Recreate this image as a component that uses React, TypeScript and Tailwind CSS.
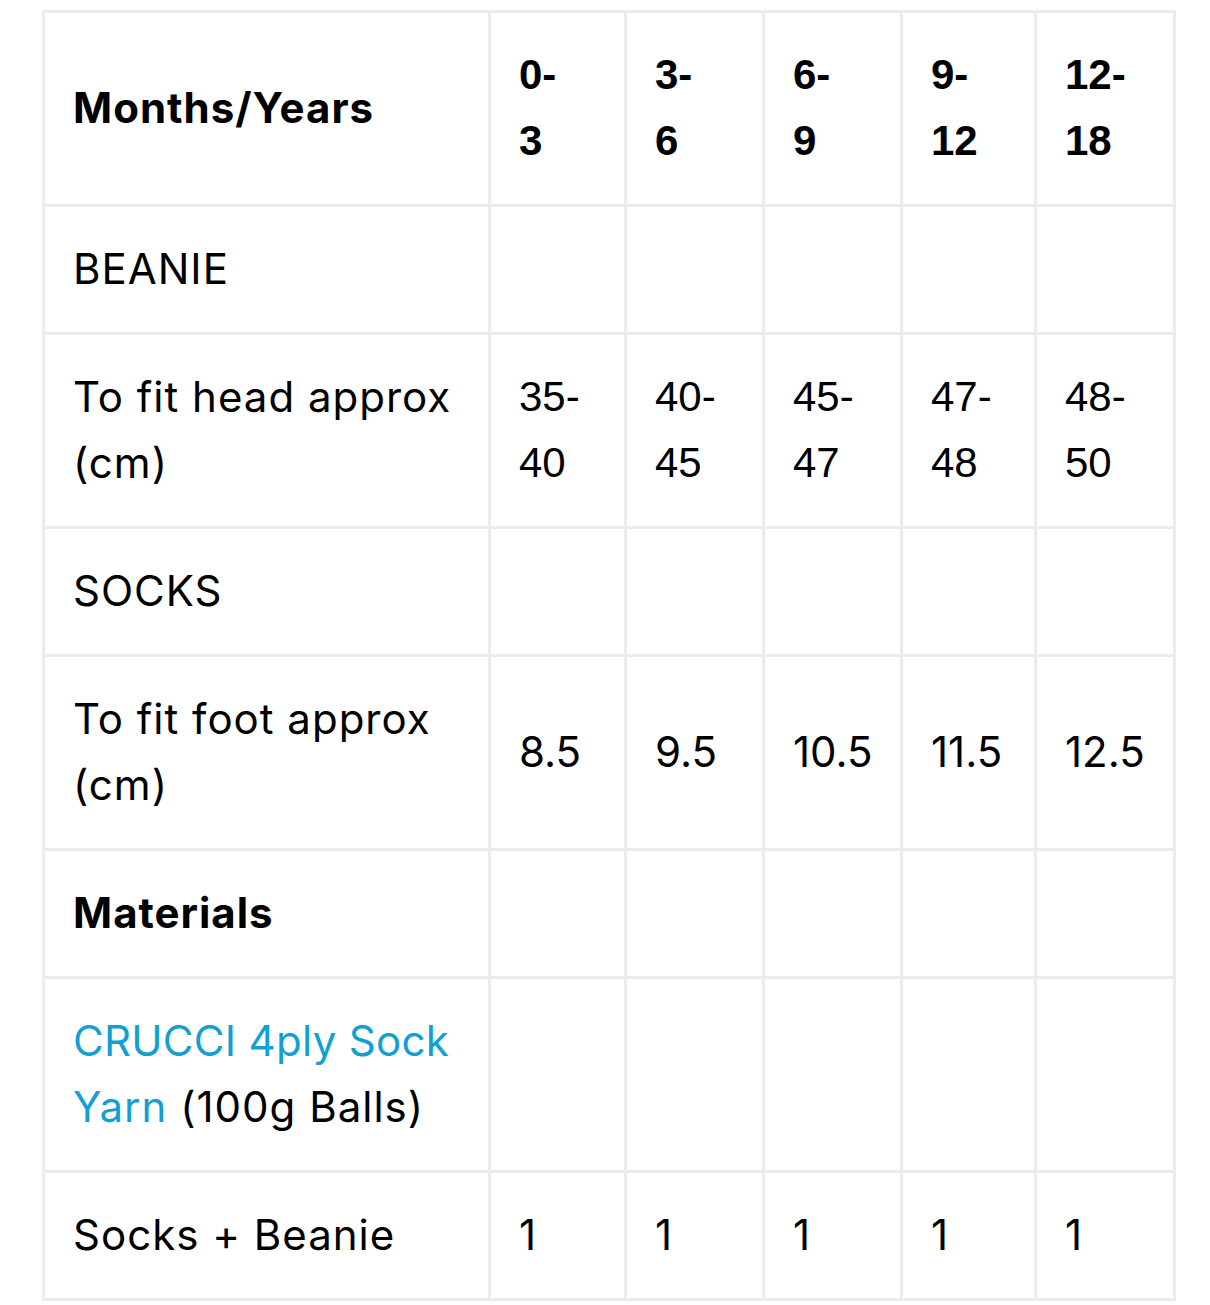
import React from 'react';

const sans = "font-['Inter','Noto_Sans',sans-serif] tracking-[1px]";
const num = "font-['Inter','Noto_Sans',sans-serif]";
const arial = "font-['Liberation_Sans',Arial,sans-serif]";

type Cell = { lines: string[]; arial?: boolean };

const sizes = ['0-3', '3-6', '6-9', '9-12', '12-18'];

function split(v: string): Cell {
  if (v.includes('-')) {
    const [a, b] = v.split('-');
    return { lines: [a + '-', b], arial: true };
  }
  return { lines: [v] };
}

const cellBase =
  'border-[3px] border-[#ececec] pl-[28px] pr-2 pt-[29px] pb-[30px] align-middle whitespace-nowrap ';

function Td({ cell, bold }: { cell: Cell; bold?: boolean }) {
  return (
    <td className={cellBase + (cell.arial ? arial : num) + (bold ? ' font-bold' : '')}>
      {cell.lines.map((l, i) => (
        <div key={i}>{l}</div>
      ))}
    </td>
  );
}

function Label({ children, bold }: { children: React.ReactNode; bold?: boolean }) {
  return <td className={cellBase + sans + (bold ? ' font-bold' : '')}>{children}</td>;
}

function Empty() {
  return <td className="border-[3px] border-[#ececec]" />;
}

export default function App() {
  return (
    <div className="bg-white min-h-[1305px] pt-[10px] pl-[42px]">
      <table className="table-fixed border-collapse w-[1131px] text-[42px] leading-[66px] text-black">
        <colgroup>
          <col className="w-[446px]" />
          <col className="w-[136px]" />
          <col className="w-[138px]" />
          <col className="w-[138px]" />
          <col className="w-[134px]" />
          <col className="w-[139px]" />
        </colgroup>
        <tbody>
          <tr>
            <Label bold>Months/Years</Label>
            {sizes.map((s) => (
              <Td key={s} cell={split(s)} bold />
            ))}
          </tr>
          <tr>
            <Label>BEANIE</Label>
            {sizes.map((s) => (
              <Empty key={s} />
            ))}
          </tr>
          <tr>
            <Label>
              <div>To fit head approx</div>
              <div>(cm)</div>
            </Label>
            {['35-40', '40-45', '45-47', '47-48', '48-50'].map((v) => (
              <Td key={v} cell={split(v)} />
            ))}
          </tr>
          <tr>
            <Label>SOCKS</Label>
            {sizes.map((s) => (
              <Empty key={s} />
            ))}
          </tr>
          <tr>
            <Label>
              <div>To fit foot approx</div>
              <div>(cm)</div>
            </Label>
            {['8.5', '9.5', '10.5', '11.5', '12.5'].map((v) => (
              <Td key={v} cell={split(v)} />
            ))}
          </tr>
          <tr>
            <Label bold>Materials</Label>
            {sizes.map((s) => (
              <Empty key={s} />
            ))}
          </tr>
          <tr>
            <Label>
              <div>
                <a href="#" className="text-[#129fd3] tracking-[0.3px]">CRUCCI 4ply Sock</a>
              </div>
              <div>
                <a href="#" className="text-[#129fd3]">Yarn</a> (100g Balls)
              </div>
            </Label>
            {sizes.map((s) => (
              <Empty key={s} />
            ))}
          </tr>
          <tr>
            <Label>Socks + Beanie</Label>
            {sizes.map((s) => (
              <Td key={s} cell={{ lines: ['1'] }} />
            ))}
          </tr>
        </tbody>
      </table>
    </div>
  );
}
